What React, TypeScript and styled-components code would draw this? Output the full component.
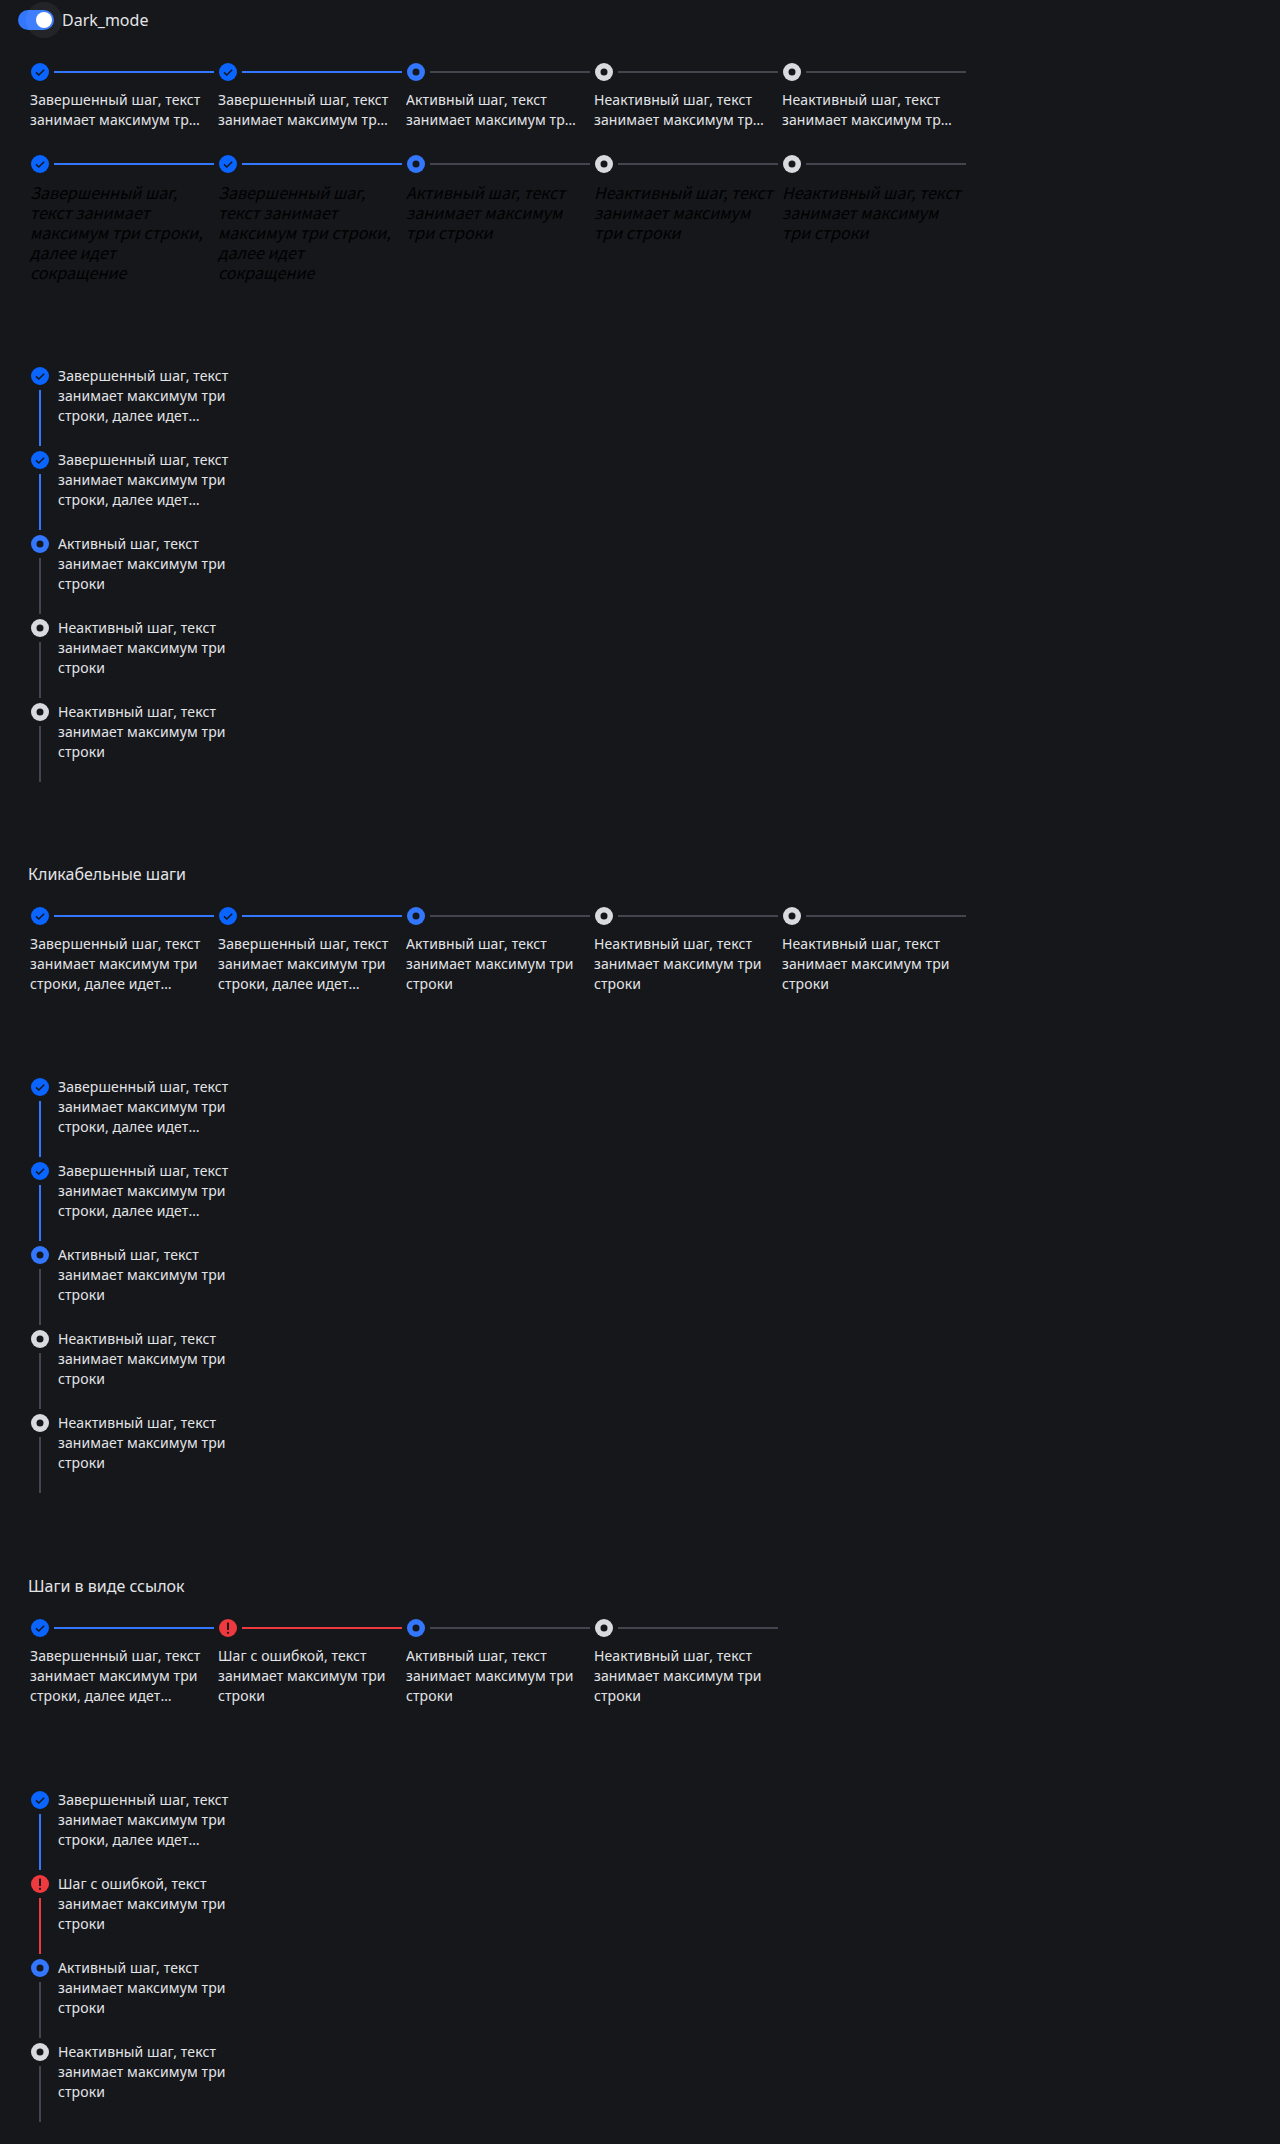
import React from 'react';
import styled, { createGlobalStyle } from 'styled-components';

type Status = 'done' | 'active' | 'idle' | 'error';

const GlobalStyle = createGlobalStyle`
  html, body { margin: 0; padding: 0; background: #15171a; }
  body { font-family: "Noto Sans", sans-serif; }
`;

const tone: Record<Status, string> = {
  done: '#3377ff',
  active: '#43444d',
  idle: '#43444d',
  error: '#ee3a3f',
};

const Page = styled.div`
  display: flex;
  flex-direction: column;
  width: 1280px;
  height: 2144px;
  box-sizing: border-box;
  padding-left: 30px;
  background: #15171a;
  color: #e3e4e8;
  overflow: hidden;
`;

const Toolbar = styled.label`
  display: flex;
  align-items: center;
  gap: 8px;
  height: 40px;
  margin-left: -12px;
  font-size: 16px;
  line-height: 24px;
  color: #e3e4e8;
`;

const Track = styled.span`
  position: relative;
  display: block;
  width: 36px;
  height: 20px;
  border-radius: 10px;
  background: #3377ff;
`;

const Halo = styled.span`
  position: absolute;
  top: -8px;
  left: 8px;
  width: 36px;
  height: 36px;
  border-radius: 50%;
  background: rgba(255, 255, 255, 0.06);
`;

const Thumb = styled.span`
  position: absolute;
  top: 2px;
  left: 18px;
  width: 16px;
  height: 16px;
  border-radius: 50%;
  background: #ffffff;
`;

const Heading = styled.h2<{ $top: number }>`
  margin: ${(p) => p.$top}px 0 0 -2px;
  font-size: 16px;
  line-height: 24px;
  font-weight: 400;
  color: #e3e4e8;
`;

const HorizontalList = styled.ol<{ $top: number }>`
  display: flex;
  margin: ${(p) => p.$top}px 0 0;
  padding: 0;
  list-style: none;
`;

const HorizontalStep = styled.li`
  display: flex;
  flex-direction: column;
  width: 188px;
`;

const StepHead = styled.div`
  display: flex;
  align-items: center;
  height: 20px;
`;

const HorizontalLine = styled.span<{ $status: Status }>`
  flex: 1;
  height: 2px;
  margin: 0 4px;
  background: ${(p) => tone[p.$status]};
`;

const Marker = styled.svg`
  display: block;
  flex: none;
  width: 20px;
  height: 20px;
`;

const Label = styled.div<{ $lines: number }>`
  display: -webkit-box;
  -webkit-box-orient: vertical;
  -webkit-line-clamp: ${(p) => p.$lines};
  align-self: flex-start;
  overflow: hidden;
  width: 176px;
  font-size: 14px;
  line-height: 20px;
  letter-spacing: 0.1px;
  color: #e3e4e8;
`;

const HorizontalLabel = styled(Label)`
  margin-top: 8px;
`;

const GhostLabel = styled.div`
  width: 184px;
  margin-top: 8px;
  font-family: "Noto Sans CJK SC", "Noto Sans", sans-serif;
  font-size: 16px;
  line-height: 20px;
  font-style: italic;
  color: #000000;
`;

const VerticalList = styled.ol<{ $top: number }>`
  display: flex;
  flex-direction: column;
  margin: ${(p) => p.$top}px 0 0;
  padding: 0;
  list-style: none;
`;

const VerticalStep = styled.li`
  display: flex;
  gap: 8px;
  height: 84px;
`;

const Rail = styled.div`
  display: flex;
  flex-direction: column;
  align-items: center;
  width: 20px;
`;

const VerticalLine = styled.span<{ $status: Status }>`
  flex: 1;
  width: 2px;
  margin: 4px 0;
  background: ${(p) => tone[p.$status]};
`;

const StepIcon = ({ status }: { status: Status }) => {
  if (status === 'done') {
    return (
      <Marker viewBox="0 0 20 20">
        <circle cx="10" cy="10" r="9" fill="#0a64ff" />
        <path d="M6 10.4 L8.8 13 L14.2 7.8" fill="none" stroke="#15171a" strokeWidth="1.5" />
      </Marker>
    );
  }
  if (status === 'error') {
    return (
      <Marker viewBox="0 0 20 20">
        <circle cx="10" cy="10" r="9" fill="#ee3a3f" />
        <rect x="9" y="4.5" width="2" height="7.5" rx="0.5" fill="#15171a" />
        <rect x="9" y="13.8" width="2" height="2" rx="0.5" fill="#15171a" />
      </Marker>
    );
  }
  return (
    <Marker viewBox="0 0 20 20">
      <circle cx="10" cy="10" r="9" fill={status === 'active' ? '#3377ff' : '#d9dadf'} />
      <circle cx="10" cy="10" r="3.5" fill="#15171a" />
    </Marker>
  );
};

interface Step {
  status: Status;
  text: string;
}

const doneText = 'Завершенный шаг, текст занимает максимум три строки, далее идет сокращение';
const activeText = 'Активный шаг, текст занимает максимум три строки';
const idleText = 'Неактивный шаг, текст занимает максимум три строки';
const errorText = 'Шаг с ошибкой, текст занимает максимум три строки';

const fiveSteps: Step[] = [
  { status: 'done', text: doneText },
  { status: 'done', text: doneText },
  { status: 'active', text: activeText },
  { status: 'idle', text: idleText },
  { status: 'idle', text: idleText },
];

const linkSteps: Step[] = [
  { status: 'done', text: doneText },
  { status: 'error', text: errorText },
  { status: 'active', text: activeText },
  { status: 'idle', text: idleText },
];

const Horizontal = ({ steps, top, lines = 3 }: { steps: Step[]; top: number; lines?: number }) => (
  <HorizontalList $top={top}>
    {steps.map((s, i) => (
      <HorizontalStep key={i}>
        <StepHead>
          <StepIcon status={s.status} />
          <HorizontalLine $status={s.status} />
        </StepHead>
        <HorizontalLabel $lines={lines}>{s.text}</HorizontalLabel>
      </HorizontalStep>
    ))}
  </HorizontalList>
);

const Ghost = ({ steps, top }: { steps: Step[]; top: number }) => (
  <HorizontalList $top={top}>
    {steps.map((s, i) => (
      <HorizontalStep key={i}>
        <StepHead>
          <StepIcon status={s.status} />
          <HorizontalLine $status={s.status} />
        </StepHead>
        <GhostLabel>{s.text}</GhostLabel>
      </HorizontalStep>
    ))}
  </HorizontalList>
);

const Vertical = ({ steps, top }: { steps: Step[]; top: number }) => (
  <VerticalList $top={top}>
    {steps.map((s, i) => (
      <VerticalStep key={i}>
        <Rail>
          <StepIcon status={s.status} />
          <VerticalLine $status={s.status} />
        </Rail>
        <Label $lines={3}>{s.text}</Label>
      </VerticalStep>
    ))}
  </VerticalList>
);

export default function App() {
  return (
    <Page>
      <GlobalStyle />
      <Toolbar>
        <Track>
          <Halo />
          <Thumb />
        </Track>
        Dark_mode
      </Toolbar>
      <Horizontal steps={fiveSteps} top={22} lines={2} />
      <Ghost steps={fiveSteps} top={24} />
      <Vertical steps={fiveSteps} top={84} />
      <Heading $top={76}>Кликабельные шаги</Heading>
      <Horizontal steps={fiveSteps} top={20} />
      <Vertical steps={fiveSteps} top={83} />
      <Heading $top={77}>Шаги в виде ссылок</Heading>
      <Horizontal steps={linkSteps} top={20} />
      <Vertical steps={linkSteps} top={84} />
    </Page>
  );
}
